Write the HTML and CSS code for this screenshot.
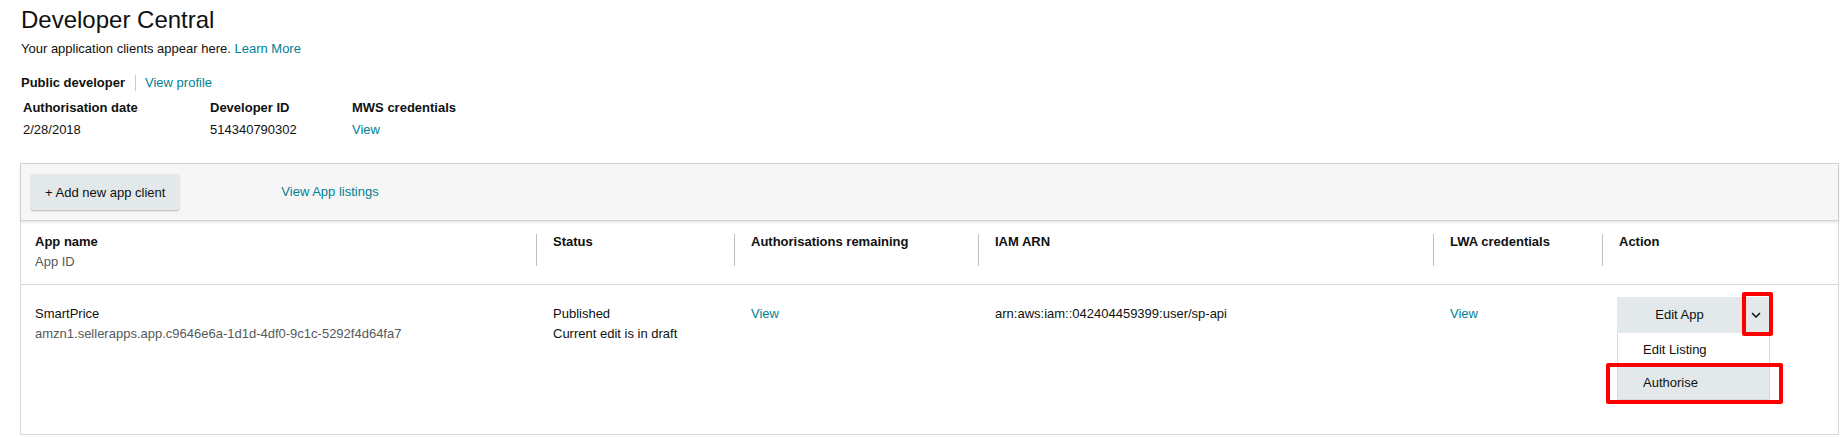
FILE: index.html
```html
<!DOCTYPE html>
<html lang="en">
<head>
    <meta charset="UTF-8">
    <title>Developer Central</title>
    <link rel="stylesheet" href="styles.css">
</head>
<body>
<div class="page">
    <h1 class="title">Developer Central</h1>
    <p class="intro">Your application clients appear here. <a href="#">Learn More</a></p>

    <div class="dev-type">
        <strong>Public developer</strong>
        <a href="#">View profile</a>
    </div>

    <div class="details">
        <b>Authorisation date</b>
        <b>Developer ID</b>
        <b>MWS credentials</b>
        <span>2/28/2018</span>
        <span>514340790302</span>
        <a href="#">View</a>
    </div>

    <div class="panel">
        <div class="toolbar">
            <button class="btn">+ Add new app client</button>
            <a href="#" class="listings">View App listings</a>
        </div>

        <div class="thead">
            <div class="cell first"><div class="inner"><b>App name</b><br><span class="muted">App ID</span></div></div>
            <div class="cell"><div class="inner"><b>Status</b></div></div>
            <div class="cell"><div class="inner"><b>Authorisations remaining</b></div></div>
            <div class="cell"><div class="inner"><b>IAM ARN</b></div></div>
            <div class="cell"><div class="inner"><b>LWA credentials</b></div></div>
            <div class="cell"><div class="inner"><b>Action</b></div></div>
        </div>

        <div class="trow">
            <div class="cell first">SmartPrice<br><span class="muted">amzn1.sellerapps.app.c9646e6a-1d1d-4df0-9c1c-5292f4d64fa7</span></div>
            <div class="cell">Published<br>Current edit is in draft</div>
            <div class="cell"><a href="#">View</a></div>
            <div class="cell">arn:aws:iam::042404459399:user/sp-api</div>
            <div class="cell"><a href="#">View</a></div>
            <div class="cell action">
                <div class="split">
                    <span class="split-main">Edit App</span>
                    <span class="split-toggle">
                        <svg width="10" height="6" viewBox="0 0 10 6"><path d="M1 1l4 4 4-4" fill="none" stroke="#0f1111" stroke-width="1.5"/></svg>
                    </span>
                    <div class="menu">
                        <div class="menu-item">Edit Listing</div>
                        <div class="menu-item active">Authorise</div>
                    </div>
                    <div class="mark mark-toggle"></div>
                    <div class="mark mark-item"></div>
                </div>
            </div>
        </div>
    </div>
</div>
</body>
</html>
```

FILE: styles.css
```css
* {
    box-sizing: border-box;
}
body {
    margin: 0;
    font-family: "Liberation Sans", Arial, sans-serif;
    font-size: 13px;
    color: #0f1111;
    background: #fff;
}
a {
    color: #008296;
    text-decoration: none;
}
.page {
    padding: 0 7px 0 20px;
}
.title {
    margin: 6px 0 0 1px;
    font-size: 24px;
    font-weight: normal;
    line-height: 28px;
    color: #0f1111;
}
.intro {
    margin: 7px 0 0 1px;
    line-height: 16px;
}
.dev-type {
    display: flex;
    align-items: center;
    margin: 18px 0 0 1px;
    line-height: 16px;
}
.dev-type strong {
    padding-right: 10px;
    border-right: 1px solid #c5cccc;
}
.dev-type a {
    padding-left: 9px;
}
.details {
    display: grid;
    grid-template-columns: 187px 142px auto;
    margin: 6px 0 0 3px;
    line-height: 22px;
}
.panel {
    margin-top: 22px;
    border: 1px solid #d5d9d9;
}
.toolbar {
    position: relative;
    z-index: 1;
    display: flex;
    align-items: flex-start;
    height: 57px;
    padding: 10px;
    background: #f6f6f6;
    border-bottom: 1px solid #d0d5d5;
    box-shadow: 0 1px 3px rgba(0, 0, 0, 0.15);
}
.btn {
    height: 36px;
    padding: 0 14px;
    border: none;
    border-radius: 2px;
    background: #e3e9ea;
    box-shadow: 0 1px 2px rgba(0, 0, 0, 0.25);
    font-family: inherit;
    font-size: 13px;
    color: #0f1111;
}
.listings {
    margin-left: 102px;
    line-height: 36px;
}
.thead, .trow {
    display: grid;
    grid-template-columns: 515px 198px 244px 455px 169px 1fr;
}
.thead {
    height: 64px;
    padding-top: 13px;
    border-bottom: 1px solid #d5d9d9;
}
.thead .cell {
    height: 32px;
    padding-left: 16px;
    border-left: 1px solid #b8c2c3;
}
.thead .cell.first {
    padding-left: 14px;
    border-left: none;
}
.thead .inner {
    margin-top: -2px;
    line-height: 20px;
}
.muted {
    color: #565959;
}
.trow {
    height: 149px;
    padding-top: 12px;
}
.trow .cell {
    padding: 7px 0 0 17px;
    line-height: 20px;
}
.trow .cell.first {
    padding-left: 14px;
}
.trow .cell.action {
    padding: 0 0 0 15px;
}
.split {
    position: relative;
    display: flex;
    width: 153px;
    height: 36px;
    background: #e3e9ea;
}
.split-main {
    width: 125px;
    line-height: 36px;
    text-align: center;
}
.split-toggle {
    display: flex;
    align-items: center;
    justify-content: center;
    width: 28px;
}
.menu {
    position: absolute;
    top: 36px;
    left: 0;
    width: 153px;
    background: #fff;
    border: 1px solid #d5d9d9;
    border-top: none;
}
.menu-item {
    height: 34px;
    padding-left: 25px;
    line-height: 34px;
}
.menu-item.active {
    height: 32px;
    line-height: 32px;
    background: #e3e9ea;
}
.mark {
    position: absolute;
    border: 4px solid #ff0000;
    border-radius: 2px;
}
.mark-toggle {
    left: 125px;
    top: -5px;
    width: 31px;
    height: 44px;
}
.mark-item {
    left: -11px;
    top: 66px;
    width: 177px;
    height: 41px;
}
```
